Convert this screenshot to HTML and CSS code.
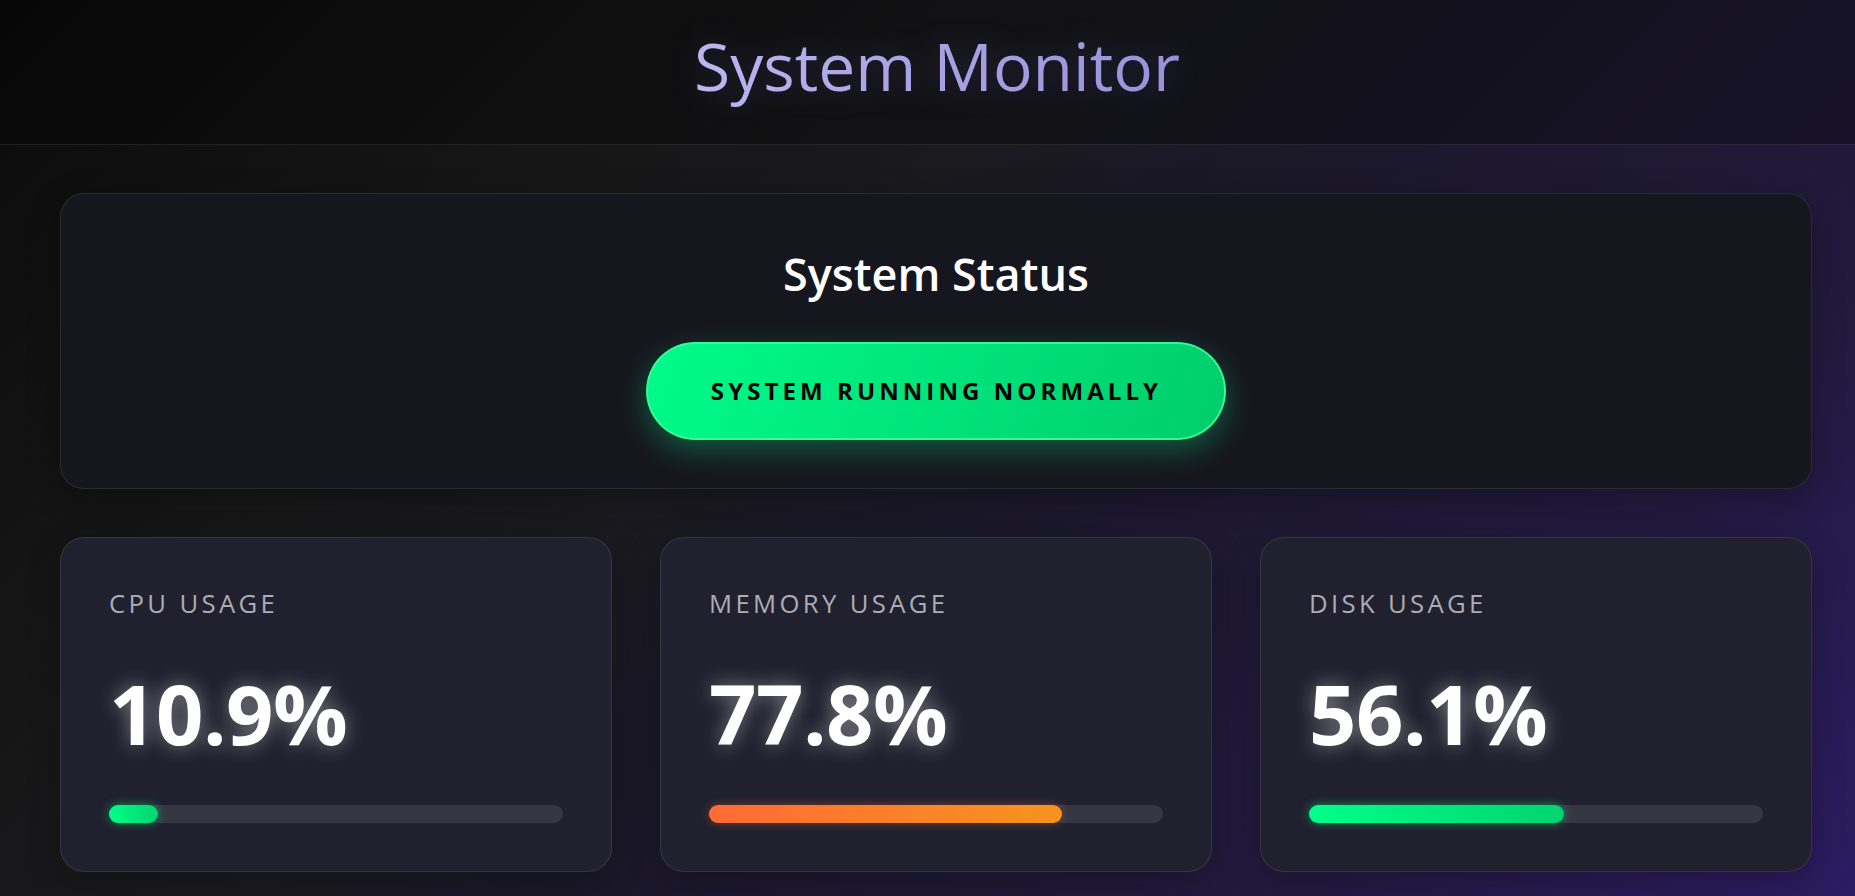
FILE: index.html
```html
<!DOCTYPE html>
<html lang="en">
<head>
<meta charset="utf-8">
<title>System Monitor</title>
<link rel="stylesheet" href="styles.css">
</head>
<body>
<header class="topbar">
  <h1 class="title">System Monitor</h1>
</header>
<main class="main">
  <section class="status-card">
    <h2 class="status-title">System Status</h2>
    <div class="status-pill">SYSTEM RUNNING NORMALLY</div>
  </section>
  <section class="metrics">
    <div class="metric-card">
      <div class="metric-label">CPU Usage</div>
      <div class="metric-value">10.9%</div>
      <div class="bar"><div class="bar-fill fill-green" style="width:10.9%"></div></div>
    </div>
    <div class="metric-card">
      <div class="metric-label">Memory Usage</div>
      <div class="metric-value">77.8%</div>
      <div class="bar"><div class="bar-fill fill-orange" style="width:77.8%"></div></div>
    </div>
    <div class="metric-card">
      <div class="metric-label">Disk Usage</div>
      <div class="metric-value">56.1%</div>
      <div class="bar"><div class="bar-fill fill-green" style="width:56.1%"></div></div>
    </div>
  </section>
</main>
</body>
</html>
```
FILE: styles.css
```css
* { box-sizing: border-box; }
html, body { margin: 0; padding: 0; }
body {
  font-family: "Open Sans", "Noto Sans", sans-serif;
  color: #fff;
  min-height: 100vh;
  overflow-x: hidden;
  background: linear-gradient(135deg, #0b0b0b 0%, #161616 25%, #1a1a1f 40%, #1b1828 52%, #221a3e 78%, #2c1c62 100%) fixed;
}
.topbar {
  padding: 20px 0 34px 19px;
  background: rgba(0, 0, 0, 0.28);
  border-bottom: 1px solid rgba(255, 255, 255, 0.09);
  text-align: center;
}
.title {
  margin: 0;
  font-size: 66px;
  line-height: 90px;
  font-weight: 400;
  display: inline-block;
  background: linear-gradient(90deg, #bab6ee 0%, #a6a2e2 50%, #9892d8 100%);
  -webkit-background-clip: text;
  background-clip: text;
  -webkit-text-fill-color: transparent;
  color: transparent;
  filter: drop-shadow(0 0 14px rgba(120, 100, 220, 0.25));
}
.main {
  padding: 48px 43px 48px 60px;
  display: flex;
  flex-direction: column;
  gap: 48px;
}
.status-card {
  background: #16161f;
  border: 1px solid rgba(255, 255, 255, 0.09);
  border-radius: 24px;
  padding: 48px;
  text-align: center;
  box-shadow: 0 8px 32px rgba(0, 0, 0, 0.3);
}
.status-title {
  margin: 0 0 36px;
  font-size: 45px;
  line-height: 64px;
  font-weight: 600;
  color: #fff;
}
.status-pill {
  display: inline-block;
  height: 98px;
  line-height: 94px;
  padding: 0 62px 0 63px;
  border-radius: 49px;
  border: 2px solid rgba(60, 255, 150, 0.85);
  background: linear-gradient(110deg, #00fb8a 0%, #00e47c 50%, #00cd6c 100%);
  color: #000;
  font-size: 24px;
  font-weight: 700;
  letter-spacing: 0.17em;
  box-shadow: 0 10px 30px rgba(0, 255, 136, 0.3);
}
.metrics {
  display: grid;
  grid-template-columns: repeat(3, 1fr);
  gap: 48px;
}
.metric-card {
  background: #20202e;
  border: 1px solid rgba(255, 255, 255, 0.1);
  border-radius: 24px;
  padding: 48px;
  box-shadow: 0 8px 32px rgba(0, 0, 0, 0.25);
}
.metric-label {
  font-size: 25.7px;
  line-height: 35px;
  font-weight: 500;
  color: #acacb4;
  text-transform: uppercase;
  letter-spacing: 0.13em;
  margin-bottom: 35px;
}
.metric-value {
  font-size: 83px;
  line-height: 114px;
  font-weight: 700;
  color: #fff;
  letter-spacing: -0.5px;
  text-shadow: 0 0 20px rgba(255, 255, 255, 0.45);
  margin-bottom: 35px;
}
.bar {
  height: 18px;
  border-radius: 9px;
  background: rgba(255, 255, 255, 0.1);
}
.bar-fill {
  height: 100%;
  border-radius: 9px;
}
.fill-green {
  background: linear-gradient(90deg, #00ff88 0%, #00d470 100%);
  box-shadow: 0 0 10px rgba(0, 255, 136, 0.5);
}
.fill-orange {
  background: linear-gradient(90deg, #ff6b35 0%, #f7931e 100%);
  box-shadow: 0 0 10px rgba(255, 107, 53, 0.4);
}
```
